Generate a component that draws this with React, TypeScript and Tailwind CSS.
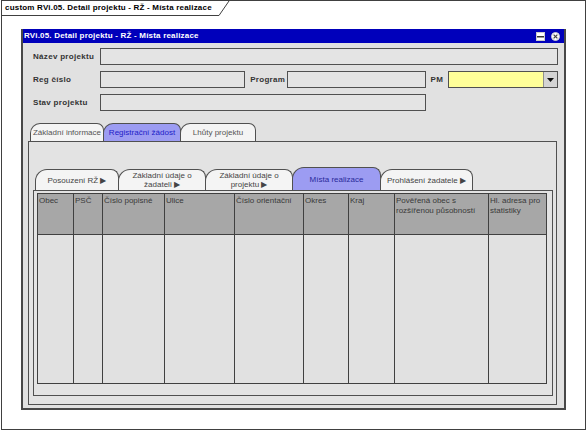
import React from "react";

const COLS: { label: string; w: string }[] = [
  { label: "Obec", w: "w-[36px]" },
  { label: "PSČ", w: "w-[29px]" },
  { label: "Číslo popisné", w: "w-[62px]" },
  { label: "Ulice", w: "w-[70px]" },
  { label: "Číslo orientační", w: "w-[69px]" },
  { label: "Okres", w: "w-[45px]" },
  { label: "Kraj", w: "w-[46px]" },
  { label: "Pověřená obec s rozšířenou působností", w: "w-[94px]" },
  { label: "Hl. adresa pro statistiky", w: "w-[58px]" },
];

function Input({ className }: { className: string }) {
  return <div className={`h-[17px] border border-[#505050] bg-[#e4e4e4] ${className}`} />;
}

function Label({ children, className = "" }: { children: React.ReactNode; className?: string }) {
  return (
    <span className={`text-[8px] font-bold tracking-[0.3px] text-[#333] leading-none whitespace-nowrap ${className}`}>
      {children}
    </span>
  );
}

function Tab({
  label,
  selected,
  w,
}: {
  label: string;
  selected?: boolean;
  w: string;
}) {
  return (
    <div
      className={`${w} h-[18px] -mr-px border border-b-0 border-[#505050] rounded-tl-[10px] rounded-tr-[7px] flex items-center justify-center text-[8px] leading-none whitespace-nowrap ${
        selected ? "bg-[#9c9cf2] text-[#1c1cc8]" : "bg-[#f4f4f4] text-[#555]"
      }`}
    >
      {label}
    </div>
  );
}

function SubTab({
  lines,
  selected,
  w,
}: {
  lines: string[];
  selected?: boolean;
  w: string;
}) {
  return (
    <div
      className={`${w} ${
        selected ? "h-[23px] bg-[#9c9cf2] text-[#2a2a9a]" : "h-[21px] bg-[#f4f4f4] text-[#444]"
      } -mr-px border border-b-0 border-[#505050] rounded-tl-[12px] rounded-tr-[8px] flex flex-col items-center justify-center text-[8px] leading-[9px] whitespace-nowrap`}
    >
      {lines.map((l) => (
        <span key={l}>{l}</span>
      ))}
    </div>
  );
}

export default function App() {
  return (
    <div className="w-[587px] h-[431px] bg-white pl-px font-['Liberation_Sans',Arial,sans-serif]">
      <div className="w-[585px] h-[430px] border border-[#404040] bg-white flex flex-col">
        {/* frame caption */}
        <div className="relative h-[15px] w-[228px]">
          <svg className="absolute inset-0" width="228" height="15" viewBox="0 0 228 15">
            <polyline points="0,14.5 217,14.5 227,0" fill="none" stroke="#404040" strokeWidth="1" />
          </svg>
          <span className="relative block pl-[3px] pt-[3px] text-[8px] font-bold tracking-[0.2px] leading-none text-black whitespace-nowrap">
            custom RVi.05. Detail projektu - RŽ - Místa realizace
          </span>
        </div>

        {/* window */}
        <div className="ml-[19px] mt-[13px] w-[545px] h-[381px] border-2 border-t-0 border-[#484848] bg-[#e1e1e1] flex flex-col">
          <div className="h-[14px] bg-[#0000bb] flex items-center pl-[1px] pr-[4px]">
            <span className="text-[8px] font-bold tracking-[0.2px] text-white leading-none whitespace-nowrap">
              RVi.05. Detail projektu - RŽ - Místa realizace
            </span>
            <div className="ml-auto flex items-center gap-[6px]">
              <svg width="9" height="9" viewBox="0 0 9 9">
                <rect x="0.5" y="0.5" width="8" height="8" fill="#fff" stroke="#ccc" />
                <rect x="1" y="4" width="7" height="1.5" fill="#333" />
              </svg>
              <svg width="9" height="9" viewBox="0 0 9 9">
                <circle cx="4.5" cy="4.5" r="4" fill="#fff" stroke="#ccc" />
                <path d="M2.6 2.6 L6.4 6.4 M6.4 2.6 L2.6 6.4" stroke="#444" strokeWidth="1.2" />
              </svg>
            </div>
          </div>

          {/* form */}
          <div className="pt-[5px] pl-[10px] pr-[6px] flex flex-col gap-[6px]">
            <div className="flex items-center">
              <Label className="w-[67px]">Název projektu</Label>
              <Input className="w-[458px]" />
            </div>
            <div className="flex items-center">
              <Label className="w-[67px]">Reg číslo</Label>
              <Input className="w-[146px]" />
              <Label className="ml-[5px] w-[37px]">Program</Label>
              <Input className="w-[139px]" />
              <Label className="ml-[5px] w-[18px]">PM</Label>
              <div className="h-[17px] w-[110px] border border-[#505050] bg-[#ffff99] flex justify-end">
                <div className="w-[14px] h-full bg-[#d4d4d4] border-l border-[#909090] flex items-center justify-center">
                  <svg width="7" height="4" viewBox="0 0 7 4">
                    <path d="M0 0 H7 L3.5 4 Z" fill="#111" />
                  </svg>
                </div>
              </div>
            </div>
            <div className="flex items-center">
              <Label className="w-[67px]">Stav projektu</Label>
              <Input className="w-[326px]" />
            </div>
          </div>

          {/* main tabs */}
          <div className="mt-[12px] ml-[5px] mr-[7px] mb-[3px] flex-1 flex flex-col">
            <div className="flex items-end pl-[2px]">
              <Tab label="Základní informace" w="w-[74px]" />
              <Tab label="Registrační žádost" w="w-[78px]" selected />
              <Tab label="Lhůty projektu" w="w-[76px]" />
            </div>
            <div className="flex-1 border border-[#505050] bg-[#e3e3e3] flex flex-col pl-[4px] pr-[3px] pb-[8px]">
              <div className="pt-[25px] pl-[2px] flex items-end">
                <SubTab lines={["Posouzení RŽ ▶"]} w="w-[84px]" />
                <SubTab lines={["Základní údaje o", "žadateli ▶"]} w="w-[88px]" />
                <SubTab lines={["Základní údaje o", "projektu ▶"]} w="w-[88px]" />
                <SubTab lines={["Místa realizace"]} w="w-[89px]" selected />
                <SubTab lines={["Prohlášení žadatele ▶"]} w="w-[93px]" />
              </div>
              <div className="flex-1 border border-[#505050] bg-[#e3e3e3] pt-[2px] pl-[3px] pr-[5px] pb-[11px] flex">
                <div className="flex border-l border-t border-[#404040]">
                  {COLS.map((c) => (
                    <div key={c.label} className={`${c.w} flex flex-col border-r border-b border-[#404040]`}>
                      <div className="h-[41px] bg-[#a7a7a7] border-b border-[#404040] px-[1px] pt-[2px] text-[8px] leading-[10px] text-[#3a3a3a]">
                        {c.label}
                      </div>
                      <div className="flex-1 bg-[#e1e1e1]" />
                    </div>
                  ))}
                </div>
              </div>
            </div>
          </div>
        </div>
      </div>
    </div>
  );
}
